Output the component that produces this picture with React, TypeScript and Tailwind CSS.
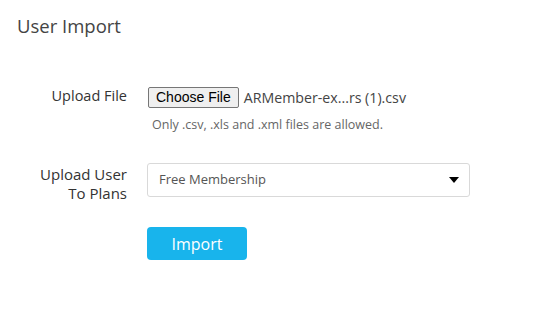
import React from 'react';

const App = () => {
  return (
    <div className="w-[536px] h-[321px] bg-white font-['Open_Sans',sans-serif] text-[#333]">
      <h2 className="pl-[17px] pt-[12px] text-[18.5px] leading-[27px] text-[#444]">User Import</h2>

      <div className="mt-[42px] flex flex-col">
        {/* Upload file */}
        <div className="flex items-start">
          <label className="w-[127px] text-right text-[14.5px] leading-[20px] pt-[5px] text-[#333]">Upload File</label>
          <div className="ml-[21px] flex flex-col">
            <div className="flex items-center h-[22px] mt-[5px]">
              <button className="h-[21px] px-[7px] border border-[#767676] rounded-[2px] bg-[#efefef] font-['Liberation_Sans',sans-serif] text-[14px] leading-none text-black">
                Choose File
              </button>
              <span className="ml-[5px] mt-[2px] text-[14.2px] text-[#444]">ARMember-ex...rs (1).csv</span>
            </div>
            <p className="mt-[9px] ml-[4px] text-[12.5px] leading-[16px] text-[#666]">Only .csv, .xls and .xml files are allowed.</p>
          </div>
        </div>

        {/* Plans */}
        <div className="flex items-start mt-[30px]">
          <label className="w-[127px] text-right text-[15px] leading-[19px] pt-[2px] text-[#333]">
            Upload User
            <br />
            To Plans
          </label>
          <div className="ml-[20px] w-[323px] h-[34px] border border-[#d9d9d9] rounded-[3px] flex items-center justify-between pl-[11px] pr-[10px]">
            <span className="text-[13px] text-[#555]">Free Membership</span>
            <svg width="10" height="6" viewBox="0 0 10 6">
              <path d="M0 0 L10 0 L5 6 Z" fill="#000" />
            </svg>
          </div>
        </div>

        <div className="ml-[147px] mt-[24px]">
          <button className="w-[100px] h-[33px] rounded-[4px] bg-[#18b4ec] text-white text-[16px]">Import</button>
        </div>
      </div>
    </div>
  );
};

export default App;
